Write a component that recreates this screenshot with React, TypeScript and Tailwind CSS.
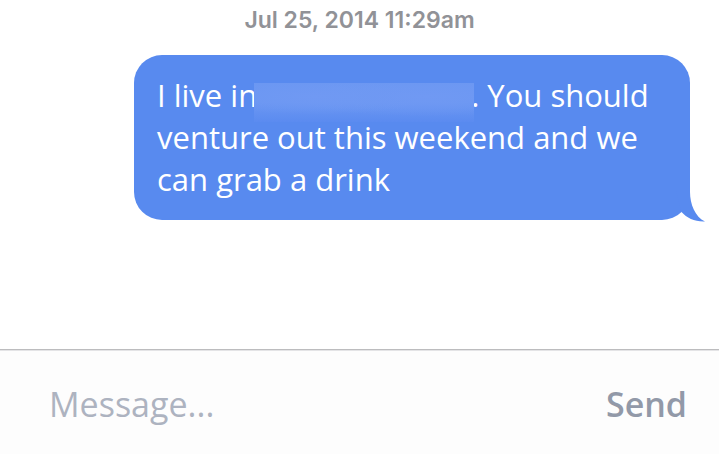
import React from 'react';

interface MessageBubbleProps {
  children: React.ReactNode;
}

function Redacted() {
  return (
    <span className="relative inline-block w-[214px]">
      {/* the blurred patch spills over the letters on both sides */}
      <span className="absolute -left-[3px] -top-6 h-[39px] w-[220px] bg-[radial-gradient(ellipse_at_28%_35%,#7099f3_0%,transparent_50%),radial-gradient(ellipse_at_78%_35%,#7099f3_0%,transparent_55%),linear-gradient(#6b97f2_50%,#5b8bf0)]"></span>
    </span>
  );
}

function MessageBubble({ children }: MessageBubbleProps) {
  return (
    <div className="relative ml-[134px] mr-[29px] rounded-[28px] bg-[#588aef] pt-[19px] pb-5 pl-[23px] pr-4">
      <p className="text-[31px] leading-[42px] text-white">{children}</p>
      <svg
        className="absolute -bottom-[2px] -right-4 h-10 w-10"
        viewBox="0 0 40 40"
        aria-hidden="true"
      >
        <path d="M10 8H24V10C24 22 29 35 39 39.500C29 40 21 36 15.500 30Z" fill="#588aef" />
      </svg>
    </div>
  );
}

export default function App() {
  return (
    <div className="flex flex-col bg-white font-['Open_Sans',sans-serif]">
      <main className="flex min-h-[349px] flex-col">
        <time
          dateTime="2014-07-25T11:29"
          className="pt-1 pb-[19px] text-center font-['Inter',sans-serif] text-[23px] leading-8 font-semibold text-[#919297]"
        >
          Jul 25, 2014 11:29am
        </time>
        <MessageBubble>
          I live in
          <Redacted />. You should
          <br />
          venture out this weekend and we
          <br />
          can grab a drink
        </MessageBubble>
      </main>

      <form
        className="flex items-center justify-between border-t border-[#bcbcbe] bg-[#fdfdfd] pt-[30px] pr-8 pb-[26px] pl-[49px] shadow-[inset_0_1px_0_#e4e4e6]"
        onSubmit={(e) => e.preventDefault()}
      >
        <input
          type="text"
          aria-label="Message"
          placeholder="Message..."
          className="h-12 min-w-0 flex-1 text-[34px] text-[#9299a8] outline-none placeholder:text-[#adb3c0]"
        />
        <button type="submit" className="h-12 text-[34px] leading-[48px] font-semibold text-[#9299a8]">
          Send
        </button>
      </form>
    </div>
  );
}
